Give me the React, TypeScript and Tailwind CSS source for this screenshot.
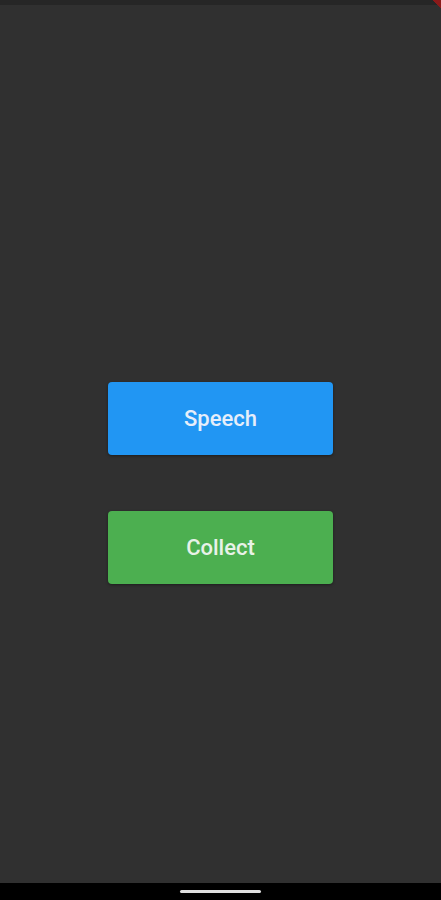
export default function App() {
  return (
    <div
      className="relative flex h-[900px] w-[441px] flex-col overflow-hidden bg-[#303030]"
      style={{ fontFamily: "Roboto, 'Noto Sans', sans-serif" }}
    >
      {/* status bar strip */}
      <div className="h-[5px] w-full bg-[#262626]" />
      <div className="absolute right-0 top-0 h-[8px] w-[8px] bg-[linear-gradient(225deg,#8b1a1a_50%,transparent_50%)]" />

      <div className="flex flex-1 flex-col items-center pt-[377px]">
        <button className="flex h-[73px] w-[225px] items-center justify-center rounded-[4px] bg-[#2196f3] text-[22px] font-medium text-[#e6eefa] shadow-[0_1px_3px_rgba(0,0,0,0.4)]">
          Speech
        </button>
        <button className="mt-[56px] flex h-[73px] w-[225px] items-center justify-center rounded-[4px] bg-[#4caf50] text-[22px] font-medium text-[#e8f2e8] shadow-[0_1px_3px_rgba(0,0,0,0.4)]">
          Collect
        </button>
      </div>

      {/* navigation bar */}
      <div className="flex h-[17px] w-full items-center justify-center bg-black">
        <div className="h-[3px] w-[81px] rounded-full bg-[#e0e0e0]" />
      </div>
    </div>
  );
}
